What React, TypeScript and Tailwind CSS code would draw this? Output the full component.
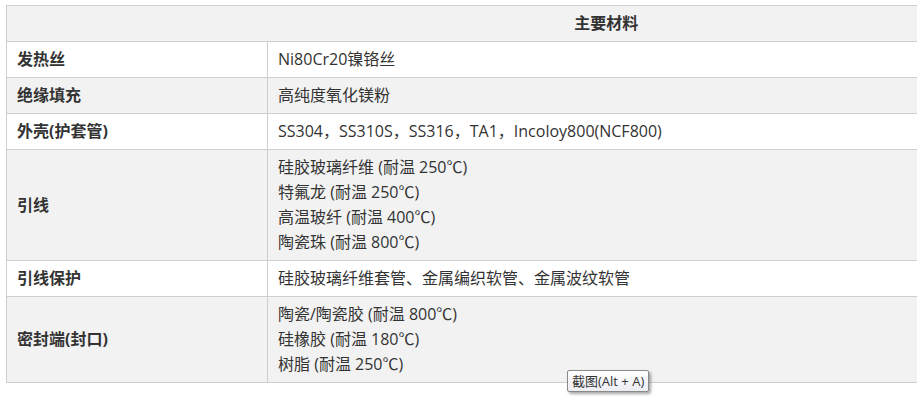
import React from "react";

// ---------- Data ----------
type Row = {
    label: string;
    lines: string[];
};

const rows: Row[] = [
    { label: "发热丝", lines: ["Ni80Cr20镍铬丝"] },
    { label: "绝缘填充", lines: ["高纯度氧化镁粉"] },
    { label: "外壳(护套管)", lines: ["SS304，SS310S，SS316，TA1，Incoloy800(NCF800)"] },
    {
        label: "引线",
        lines: [
            "硅胶玻璃纤维 (耐温 250℃)",
            "特氟龙 (耐温 250℃)",
            "高温玻纤 (耐温 400℃)",
            "陶瓷珠 (耐温 800℃)",
        ],
    },
    { label: "引线保护", lines: ["硅胶玻璃纤维套管、金属编织软管、金属波纹软管"] },
    {
        label: "密封端(封口)",
        lines: [
            "陶瓷/陶瓷胶 (耐温 800℃)",
            "硅橡胶 (耐温 180℃)",
            "树脂 (耐温 250℃)",
        ],
    },
];

const font = "font-['Open_Sans','Noto_Sans_CJK_SC',sans-serif]";

// ---------- Component ----------
const App: React.FC = () => {
    return (
        <div className={`relative h-[399px] w-[917px] overflow-hidden bg-white ${font}`}>
            <div className="pl-[6px] pt-[5px]">
                <table className="w-[940px] table-fixed border-collapse text-[16px] leading-[25px] text-[#333]">
                    <colgroup>
                        <col className="w-[261px]" />
                        <col />
                    </colgroup>
                    <thead>
                        <tr className="bg-[#f2f2f2]">
                            <th className="border border-[#cfcfcf] border-r-0 px-[10px] py-[5px]" />
                            <th className="border border-[#cfcfcf] border-l-0 px-[10px] py-[5px] text-center font-bold">
                                主要材料
                            </th>
                        </tr>
                    </thead>
                    <tbody>
                        {rows.map((row, i) => (
                            <tr
                                key={row.label}
                                className={i % 2 === 0 ? "bg-white" : "bg-[#f2f2f2]"}
                            >
                                <td className="border border-[#cfcfcf] px-[10px] py-[5px] align-middle font-bold">
                                    {row.label}
                                </td>
                                <td className="border border-[#cfcfcf] px-[10px] py-[5px] align-middle">
                                    {row.lines.map((line) => (
                                        <div key={line}>{line}</div>
                                    ))}
                                </td>
                            </tr>
                        ))}
                    </tbody>
                </table>
            </div>

            {/* Tooltip */}
            <div className="absolute left-[567px] top-[370px] rounded-[2px] border border-[#8a8a8a] bg-gradient-to-b from-white to-[#ececf2] px-[4px] text-[13px] leading-[20px] text-[#333] shadow-[2px_2px_3px_rgba(0,0,0,0.35)]">
                截图(Alt + A)
            </div>
        </div>
    );
};

export default App;
